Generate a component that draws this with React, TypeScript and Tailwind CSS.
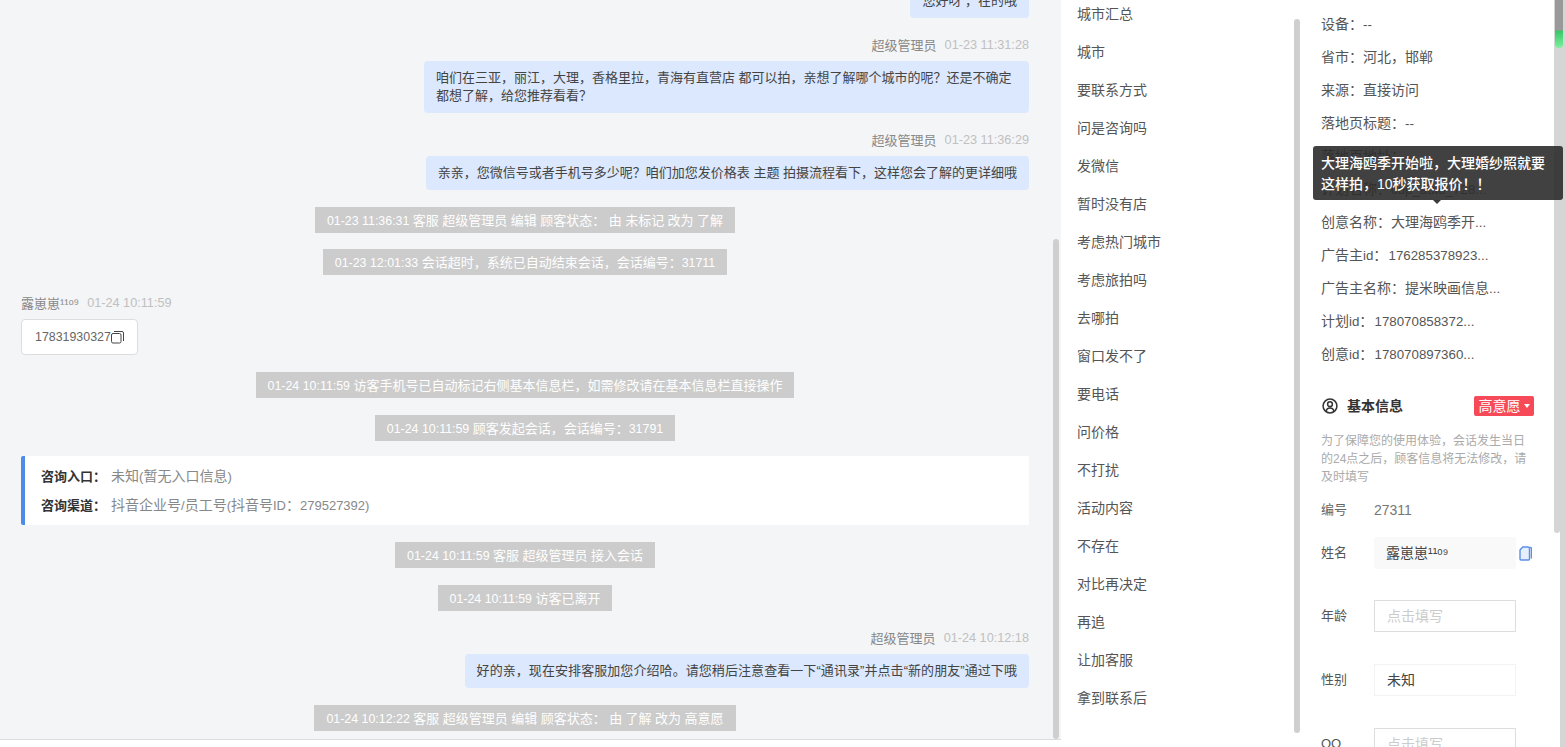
const font = { fontFamily: '"Liberation Sans", "Noto Sans CJK SC", sans-serif' };

const NAME = '露崽崽¹¹ᵒ⁹';

function Mixed({ text, cls }: { text: string; cls: string }) {
  return (
    <>
      {text.split(/([\x20-\x7e]+)/).map((part, i) =>
        i % 2 === 1 ? <span key={i} className={cls}>{part}</span> : part
      )}
    </>
  );
}

function SystemMsg({ children }: { children: string }) {
  return (
    <div className="flex justify-center">
      <div className="h-[26px] px-3 bg-[#cccccc] text-white text-[13px] leading-[28px] whitespace-nowrap">
        <Mixed text={children} cls="text-[12.4px]" />
      </div>
    </div>
  );
}

function AgentHead({ time }: { time: string }) {
  return (
    <div className="flex justify-end items-center h-[18px] pt-[2px] mb-[7px] text-[13px] whitespace-nowrap">
      <span className="text-[#888888]">超级管理员</span>
      <span className="ml-2 text-[12.7px] text-[#c0c0c0]">{time}</span>
    </div>
  );
}

function Bubble({ children, cls }: { children: string; cls: string }) {
  return (
    <div className="flex justify-end">
      <div className={`px-3 py-2 bg-[#dbe8fd] rounded-[4px] text-[13px] leading-[18px] text-[#444444] ${cls}`}>
        {children}
      </div>
    </div>
  );
}

const phrases = ['城市汇总','城市','要联系方式','问是咨询吗','发微信','暂时没有店','考虑热门城市','考虑旅拍吗','去哪拍','窗口发不了','要电话','问价格','不打扰','活动内容','不存在','对比再决定','再追','让加客服','拿到联系后'];

const infoRows: string[] = [
  '设备：--',
  '省市：河北，邯郸',
  '来源：直接访问',
  '落地页标题：--',
  '落地页地址：',
  '计划名称：cdp_auto_728...',
  '创意名称：大理海鸥季开...',
  '广告主id：\u200a176285378923...',
  '广告主名称：提米映画信息...',
  '计划id：\u200a178070858372...',
  '创意id：\u200a178070897360...',
];

function Field({ label, cls, children }: { label: string; cls: string; children: React.ReactNode }) {
  return (
    <div className={`flex items-center h-8 ${cls}`}>
      <div className="w-[53px] text-[13px] text-[#555555]">{label}</div>
      {children}
    </div>
  );
}

export default function App() {
  return (
    <div style={font} className="relative flex h-[747px] w-[1566px] overflow-hidden bg-white">
      {/* Chat column */}
      <div className="relative w-[1061px] h-[747px] shrink-0 overflow-hidden bg-[#f4f5f7]">
        <div className="pl-[21px] pr-[32px] mt-[-16px]">
          <div className="flex justify-end mb-[18px]">
            <div className="h-[34px] px-3 py-2 bg-[#dbe8fd] rounded-[4px] text-[13px] leading-[18px] text-[#444444] whitespace-pre">您好呀 ，在的哦</div>
          </div>
          <AgentHead time="01-23 11:31:28" />
          <div className="mb-[18px]">
            <Bubble cls="w-[605px]">咱们在三亚，丽江，大理，香格里拉，青海有直营店 都可以拍，亲想了解哪个城市的呢？还是不确定都想了解，给您推荐看看？</Bubble>
          </div>
          <AgentHead time="01-23 11:36:29" />
          <Bubble cls="whitespace-nowrap">亲亲，您微信号或者手机号多少呢？咱们加您发价格表 主题 拍摄流程看下，这样您会了解的更详细哦</Bubble>
          <div className="mt-[17px] mb-4"><SystemMsg>01-23 11:36:31 客服 超级管理员 编辑 顾客状态： 由 未标记 改为 了解</SystemMsg></div>
          <div className="mb-[20px]"><SystemMsg>01-23 12:01:33 会话超时，系统已自动结束会话，会话编号：31711</SystemMsg></div>
          <div className="flex items-center h-[18px] mb-[6px] text-[13px] whitespace-nowrap">
            <span className="text-[#888888]">{NAME}</span>
            <span className="ml-2 text-[12.7px] text-[#c0c0c0]">01-24 10:11:59</span>
          </div>
          <div className="inline-flex items-center h-9 px-[13px] bg-white border border-[#dddddd] rounded-[4px] text-[12.4px] text-[#666666] align-top">
            17831930327
            <svg width="13" height="13" viewBox="0 0 13 13" fill="none" stroke="#444444" strokeWidth="1">
              <rect x="0.5" y="2.5" width="9.5" height="9.5" rx="1.5" />
              <path d="M3 .5h8a1.500 1.500 0 0 1 1.500 1.500v8" />
            </svg>
          </div>
          <div className="mt-[17px] mb-[17px]"><SystemMsg>01-24 10:11:59 访客手机号已自动标记右侧基本信息栏，如需修改请在基本信息栏直接操作</SystemMsg></div>
          <div className="mb-[15px]"><SystemMsg>01-24 10:11:59 顾客发起会话，会话编号：31791</SystemMsg></div>
          <div className="h-[69px] bg-white border-l-4 border-[#4e8ae8] rounded-l-[2px] pl-4 pt-[6px] text-[13px] leading-[28px]">
            <div><b className="text-[#333333]">咨询入口：</b><span className="ml-[5px] text-[14px] text-[#888888]"><Mixed text="未知(暂无入口信息)" cls="text-[13.2px]" /></span></div>
            <div><b className="text-[#333333]">咨询渠道：</b><span className="ml-[5px] text-[14px] text-[#888888]"><Mixed text="抖音企业号/员工号(抖音号ID：279527392)" cls="text-[13px]" /></span></div>
          </div>
          <div className="mt-[17px] mb-[17px]"><SystemMsg>01-24 10:11:59 客服 超级管理员 接入会话</SystemMsg></div>
          <div className="mb-[18px]"><SystemMsg>01-24 10:11:59 访客已离开</SystemMsg></div>
          <AgentHead time="01-24 10:12:18" />
          <Bubble cls="whitespace-nowrap tracking-[0.07px]">好的亲，现在安排客服加您介绍哈。请您稍后注意查看一下“通讯录”并点击“新的朋友”通过下哦</Bubble>
          <div className="mt-[17px]"><SystemMsg>01-24 10:12:22 客服 超级管理员 编辑 顾客状态： 由 了解 改为 高意愿</SystemMsg></div>
        </div>
        <div className="absolute left-0 right-0 top-[739px] h-2 bg-white border-t border-[#dddddd]" />
        <div className="absolute left-[1053px] top-[239px] w-[6px] h-[500px] bg-[#cfcfcf] rounded-[3px]" />
      </div>

      {/* Phrase list */}
      <div className="relative w-[240px] h-[747px] shrink-0 overflow-hidden bg-white pl-4">
        <div className="mt-[-5px]">
          {phrases.map((p) => (
            <div key={p} className="h-[38px] leading-[38px] text-[14px] text-[#555555]">{p}</div>
          ))}
        </div>
        <div className="absolute left-[233px] top-[19px] w-[6px] h-[714px] bg-[#cfcfcf] rounded-[3px]" />
      </div>

      {/* Customer info */}
      <div className="relative w-[253px] h-[747px] shrink-0 overflow-hidden bg-white pl-5 pr-[20px]">
        <div className="mt-[8px]">
          {infoRows.map((row) => (
            <div key={row} className="h-[33px] leading-[33px] text-[14px] text-[#555555] whitespace-nowrap">
              <Mixed text={row} cls="text-[13.3px]" />
            </div>
          ))}
        </div>
        <div className="flex items-center justify-between h-5 mt-[25px]">
          <div className="flex items-center">
            <svg className="ml-px" width="16" height="16" viewBox="0 0 18 18" fill="none" stroke="#333333" strokeWidth="1.700">
              <circle cx="9" cy="9" r="7.800" />
              <circle cx="9" cy="7" r="2.700" />
              <path d="M4.500 14.500c.8-2.200 2.500-3.300 4.500-3.300s3.700 1.100 4.500 3.300" />
            </svg>
            <b className="ml-[9px] text-[14px] text-[#333333]">基本信息</b>
          </div>
          <div className="flex items-center justify-center w-[60px] h-5 bg-[#f64a58] rounded-[2px] text-[14px] text-white">
            高意愿
            <span className="ml-[3px] w-0 h-0 border-x-[3px] border-x-transparent border-t-[4px] border-t-white" />
          </div>
        </div>
        <p className="mt-[16px] text-[12px] leading-[18px] text-[#aaaaaa]">为了保障您的使用体验，会话发生当日的24点之后，顾客信息将无法修改，请及时填写</p>
        <div className="flex items-center h-[18px] mt-[15px] mb-[18px] text-[13px]">
          <div className="w-[53px] text-[#666666]">编号</div>
          <div className="text-[14px] text-[#777777]">27311</div>
        </div>
        <Field label="姓名" cls="mb-[31px]">
          <div className="w-[142px] h-8 leading-8 pl-3 bg-[#f9f9f9] rounded-[2px] text-[14px] text-[#444444]">{NAME}</div>
          <svg className="ml-[3px]" width="13" height="15" viewBox="0 0 13 15" fill="none" stroke="#5b8fe6" strokeWidth="1.400">
            <path d="M11 1.500h.4a1 1 0 0 1 1 1v10" />
            <path d="M1 4 3.800 1H9a1.500 1.500 0 0 1 1.500 1.500V13A1 1 0 0 1 9.500 14H2a1 1 0 0 1-1-1Z" fill="#e6effd" />
          </svg>
        </Field>
        <Field label="年龄" cls="mb-8">
          <div className="w-[142px] h-8 leading-[30px] pl-3 border border-[#dddddd] text-[14px] text-[#cccccc]">点击填写</div>
        </Field>
        <Field label="性别" cls="mb-8">
          <div className="w-[142px] h-8 leading-[30px] pl-3 border border-[#f3f3f3] text-[14px] text-[#444444]">未知</div>
        </Field>
        <Field label="QQ" cls="mb-8">
          <div className="w-[142px] h-8 leading-[30px] pl-3 border border-[#dddddd] text-[14px] text-[#cccccc]">点击填写</div>
        </Field>
      </div>

      {/* Outer scrollbars */}
      <div className="relative w-3 h-[747px] shrink-0 bg-white">
        <div className="absolute left-0 top-0 w-[6px] h-[533px] bg-[#d5d5d5] rounded-b-[3px]" />
        <div className="absolute left-[6px] top-0 w-[6px] h-[747px] bg-[#d5d5d5]" />
        <div className="absolute left-[1px] top-0 w-2 h-[48px] rounded-b-[4px] bg-[linear-gradient(to_bottom,#999999_0,#999999_30px,#38c768_31px,#7ef0a0_48px)]" />
      </div>

      {/* Tooltip */}
      <div className="absolute left-[1313px] top-[146px] w-[250px] h-[54px] px-2 py-[7px] bg-[#2c2c2c]/90 rounded-[3px] text-[14px] leading-[21px] font-medium text-white">
        大理海鸥季开始啦，大理婚纱照就要这样拍，10秒获取报价！！
        <span className="absolute left-[120px] top-[54px] w-0 h-0 border-x-[4px] border-x-transparent border-t-[4px] border-t-[#3a3a3a]" />
      </div>
    </div>
  );
}
